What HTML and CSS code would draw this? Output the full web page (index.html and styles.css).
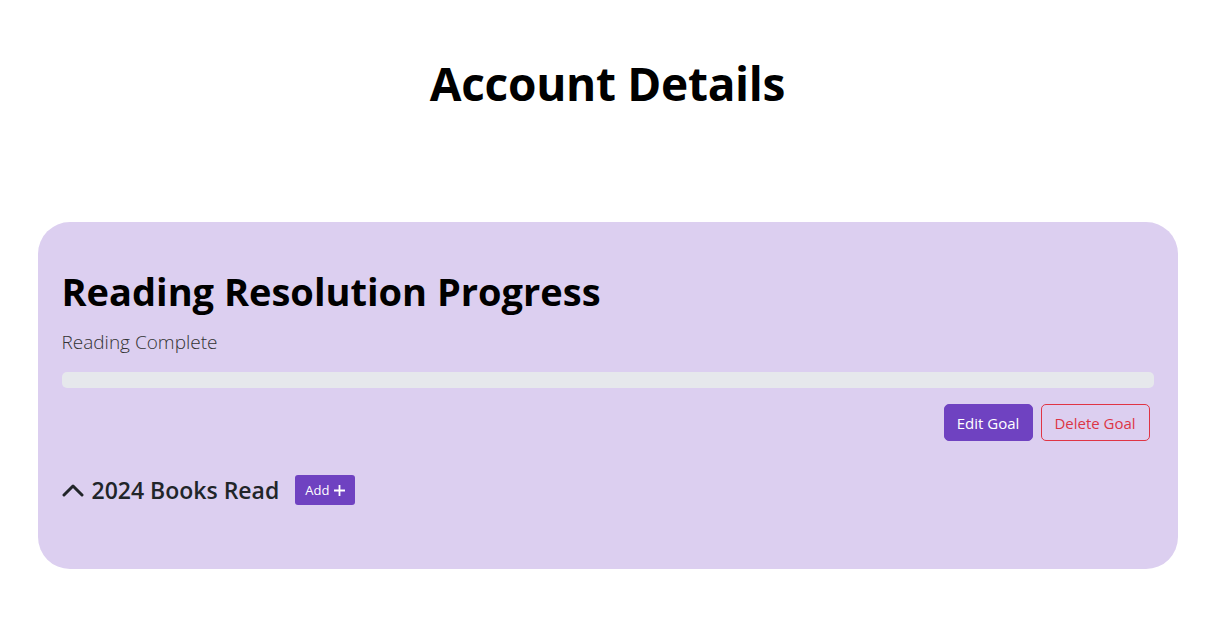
FILE: index.html
```html
<!DOCTYPE html>
<html lang="en">
<head>
<meta charset="utf-8">
<title>Account Details</title>
<link rel="stylesheet" href="styles.css">
</head>
<body>
<main class="page">
  <h1 class="page-title">Account Details</h1>
  <section class="card">
    <h2 class="card-title">Reading Resolution Progress</h2>
    <p class="status">Reading Complete</p>
    <div class="progress"><div class="progress-fill" style="width:0%"></div></div>
    <div class="actions">
      <button class="btn btn-purple">Edit Goal</button>
      <button class="btn btn-outline-danger">Delete Goal</button>
    </div>
    <div class="books-row">
      <svg class="chevron" width="22" height="14" viewBox="0 0 22 14" aria-hidden="true"><path d="M2 12 L11 3 L20 12" fill="none" stroke="#212529" stroke-width="3" stroke-linecap="round" stroke-linejoin="round"/></svg>
      <h3 class="books-title">2024 Books Read</h3>
      <button class="btn-add">Add <svg width="11" height="11" viewBox="0 0 11 11" aria-hidden="true"><path d="M5.5 0 V11 M0 5.5 H11" stroke="#fff" stroke-width="1.8"/></svg></button>
    </div>
  </section>
</main>
</body>
</html>
```
FILE: styles.css
```css
* { box-sizing: border-box; }
html, body { margin: 0; padding: 0; background: #fff; }
body {
  font-family: "Open Sans", "Noto Sans", "Liberation Sans", sans-serif;
  color: #212529;
}
.page {
  width: 1140px;
  margin: 0 auto;
  padding-top: 56px;
}
.page-title {
  margin: 0 0 111px;
  text-align: center;
  font-size: 46px;
  font-weight: 700;
  line-height: 1.2;
  letter-spacing: -0.3px;
  color: #000;
}
.card {
  background: #dccff0;
  border-radius: 32px;
  padding: 47px 24px 64px;
}
.card-title {
  margin: 0;
  font-size: 38px;
  font-weight: 700;
  line-height: 1.2;
  color: #000;
}
.status {
  margin: 14px 0 17px;
  font-size: 19px;
  font-weight: 300;
  line-height: 1.4;
  color: #333;
}
.progress {
  height: 16px;
  background: #e6e8ec;
  border-radius: 5px;
  overflow: hidden;
}
.progress-fill { height: 100%; background: #6f42c1; }
.actions {
  display: flex;
  justify-content: flex-end;
  gap: 8px;
  margin-top: 16px;
  padding-right: 4px;
}
.btn {
  font-family: inherit;
  font-size: 15px;
  line-height: 1.5;
  height: 37px;
  padding: 0 12px;
  border-radius: 5px;
  border: 1px solid transparent;
  cursor: pointer;
}
.btn-purple { background: #6f42c1; color: #fff; border-color: #6f42c1; width: 89px; }
.btn-outline-danger { background: transparent; color: #dc3545; border-color: #e03545; width: 109px; }
.books-row {
  display: flex;
  align-items: center;
  margin-top: 34px;
}
.chevron { margin-right: 8px; }
.books-title {
  margin: 0 16px 0 0;
  font-size: 23px;
  font-weight: 600;
  line-height: 1.2;
  color: #212529;
}
.btn-add {
  display: inline-flex;
  align-items: center;
  gap: 5px;
  height: 30px;
  padding: 0 10px;
  font-family: inherit;
  font-size: 13px;
  color: #fff;
  background: #6f42c1;
  border: none;
  border-radius: 3px;
}
```
